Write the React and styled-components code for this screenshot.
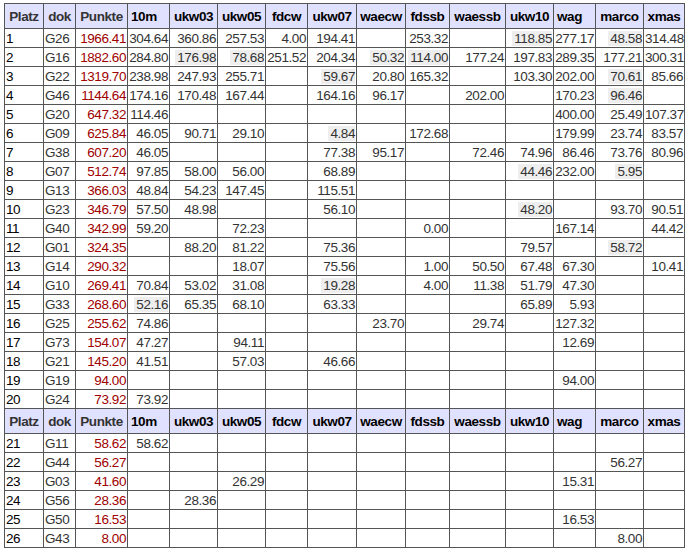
import React from "react";
import styled, { createGlobalStyle } from "styled-components";

const Global = createGlobalStyle`
  html, body { margin: 0; padding: 0; background: #fff; }
  body { padding: 3px 0 0 4px; font-family: "Liberation Sans", Arial, sans-serif; }
`;

const Table = styled.table`
  border-collapse: collapse;
  table-layout: fixed;
  width: 681px;
  font-size: 13.5px;
  letter-spacing: -0.42px;
  font-family: "Liberation Sans", Arial, sans-serif;
`;

const Head = styled.th`
  background: #e0e0ff;
  border: 1px solid #555;
  color: ${p => (p.$dark ? "#000" : "#333")};
  font-size: 13.5px;
  font-weight: bold;
  height: 24px;
  padding: 0;
  text-align: ${p => (p.$left ? "left" : "center")};
  padding-left: ${p => (p.$left ? "3px" : "0")};
`;

const Cell = styled.td`
  border: 1px solid #555;
  color: ${p => p.$color || "#333"};
  height: 18px;
  line-height: 15px;
  padding: 0 1px;
  text-align: ${p => (p.$left ? "left" : "right")};
`;

const Mark = styled.span`
  background: #eee;
  display: inline-block;
  padding-left: 2px;
`;

const cols = ["10m", "ukw03", "ukw05", "fdcw", "ukw07", "waecw", "fdssb", "waessb", "ukw10", "wag", "marco", "xmas"];
const widths = [39, 32, 52, 42, 48, 48, 42, 49, 49, 44, 56, 48, 42, 48, 41];

const rows = [
  ["G26", "1966.41", "304.64", "360.86", "257.53", "4.00", "194.41", "", "253.32", "", "*118.85", "277.17", "*48.58", "314.48"],
  ["G16", "1882.60", "284.80", "*176.98", "*78.68", "251.52", "204.34", "*50.32", "*114.00", "177.24", "197.83", "289.35", "177.21", "300.31"],
  ["G22", "1319.70", "238.98", "247.93", "255.71", "", "*59.67", "20.80", "165.32", "", "103.30", "202.00", "*70.61", "85.66"],
  ["G46", "1144.64", "174.16", "170.48", "167.44", "", "164.16", "96.17", "", "202.00", "", "170.23", "*96.46", ""],
  ["G20", "647.32", "114.46", "", "", "", "", "", "", "", "", "400.00", "25.49", "107.37"],
  ["G09", "625.84", "46.05", "90.71", "29.10", "", "*4.84", "", "172.68", "", "", "179.99", "23.74", "83.57"],
  ["G38", "607.20", "46.05", "", "", "", "77.38", "95.17", "", "72.46", "74.96", "86.46", "73.76", "80.96"],
  ["G07", "512.74", "97.85", "58.00", "56.00", "", "68.89", "", "", "", "*44.46", "232.00", "*5.95", ""],
  ["G13", "366.03", "48.84", "54.23", "147.45", "", "115.51", "", "", "", "", "", "", ""],
  ["G23", "346.79", "57.50", "48.98", "", "", "56.10", "", "", "", "*48.20", "", "93.70", "90.51"],
  ["G40", "342.99", "59.20", "", "72.23", "", "", "", "0.00", "", "", "167.14", "", "44.42"],
  ["G01", "324.35", "", "88.20", "81.22", "", "75.36", "", "", "", "79.57", "", "*58.72", ""],
  ["G14", "290.32", "", "", "18.07", "", "75.56", "", "1.00", "50.50", "67.48", "67.30", "", "10.41"],
  ["G10", "269.41", "70.84", "53.02", "31.08", "", "*19.28", "", "4.00", "11.38", "51.79", "47.30", "", ""],
  ["G33", "268.60", "*52.16", "65.35", "68.10", "", "63.33", "", "", "", "65.89", "5.93", "", ""],
  ["G25", "255.62", "74.86", "", "", "", "", "23.70", "", "29.74", "", "127.32", "", ""],
  ["G73", "154.07", "47.27", "", "94.11", "", "", "", "", "", "", "12.69", "", ""],
  ["G21", "145.20", "41.51", "", "57.03", "", "46.66", "", "", "", "", "", "", ""],
  ["G19", "94.00", "", "", "", "", "", "", "", "", "", "94.00", "", ""],
  ["G24", "73.92", "73.92", "", "", "", "", "", "", "", "", "", "", ""],
];
const rows2 = [
  ["G11", "58.62", "58.62", "", "", "", "", "", "", "", "", "", "", ""],
  ["G44", "56.27", "", "", "", "", "", "", "", "", "", "", "56.27", ""],
  ["G03", "41.60", "", "", "26.29", "", "", "", "", "", "", "15.31", "", ""],
  ["G56", "28.36", "", "28.36", "", "", "", "", "", "", "", "", "", ""],
  ["G50", "16.53", "", "", "", "", "", "", "", "", "", "16.53", "", ""],
  ["G43", "8.00", "", "", "", "", "", "", "", "", "", "", "8.00", ""],
];

const HeadRow = () => (
  <tr>
    <Head>Platz</Head>
    <Head>dok</Head>
    <Head>Punkte</Head>
    {cols.map((c, i) => (
      <Head key={c} $dark $left={i === 0 || i === 9}>{c}</Head>
    ))}
  </tr>
);

const Row = ({ place, data }) => (
  <tr>
    <Cell $left $color="#000">{place}</Cell>
    <Cell $left>{data[0]}</Cell>
    <Cell $color="#a00000">{data[1]}</Cell>
    {data.slice(2).map((v, i) => (
      <Cell key={i}>{v.startsWith("*") ? <Mark>{v.slice(1)}</Mark> : v}</Cell>
    ))}
  </tr>
);

export default function App() {
  return (
    <>
      <Global />
      <Table>
        <colgroup>
          {widths.map((w, i) => <col key={i} style={{ width: w }} />)}
        </colgroup>
        <tbody>
          <HeadRow />
          {rows.map((d, i) => <Row key={d[0]} place={i + 1} data={d} />)}
          <HeadRow />
          {rows2.map((d, i) => <Row key={d[0]} place={i + 21} data={d} />)}
        </tbody>
      </Table>
    </>
  );
}
